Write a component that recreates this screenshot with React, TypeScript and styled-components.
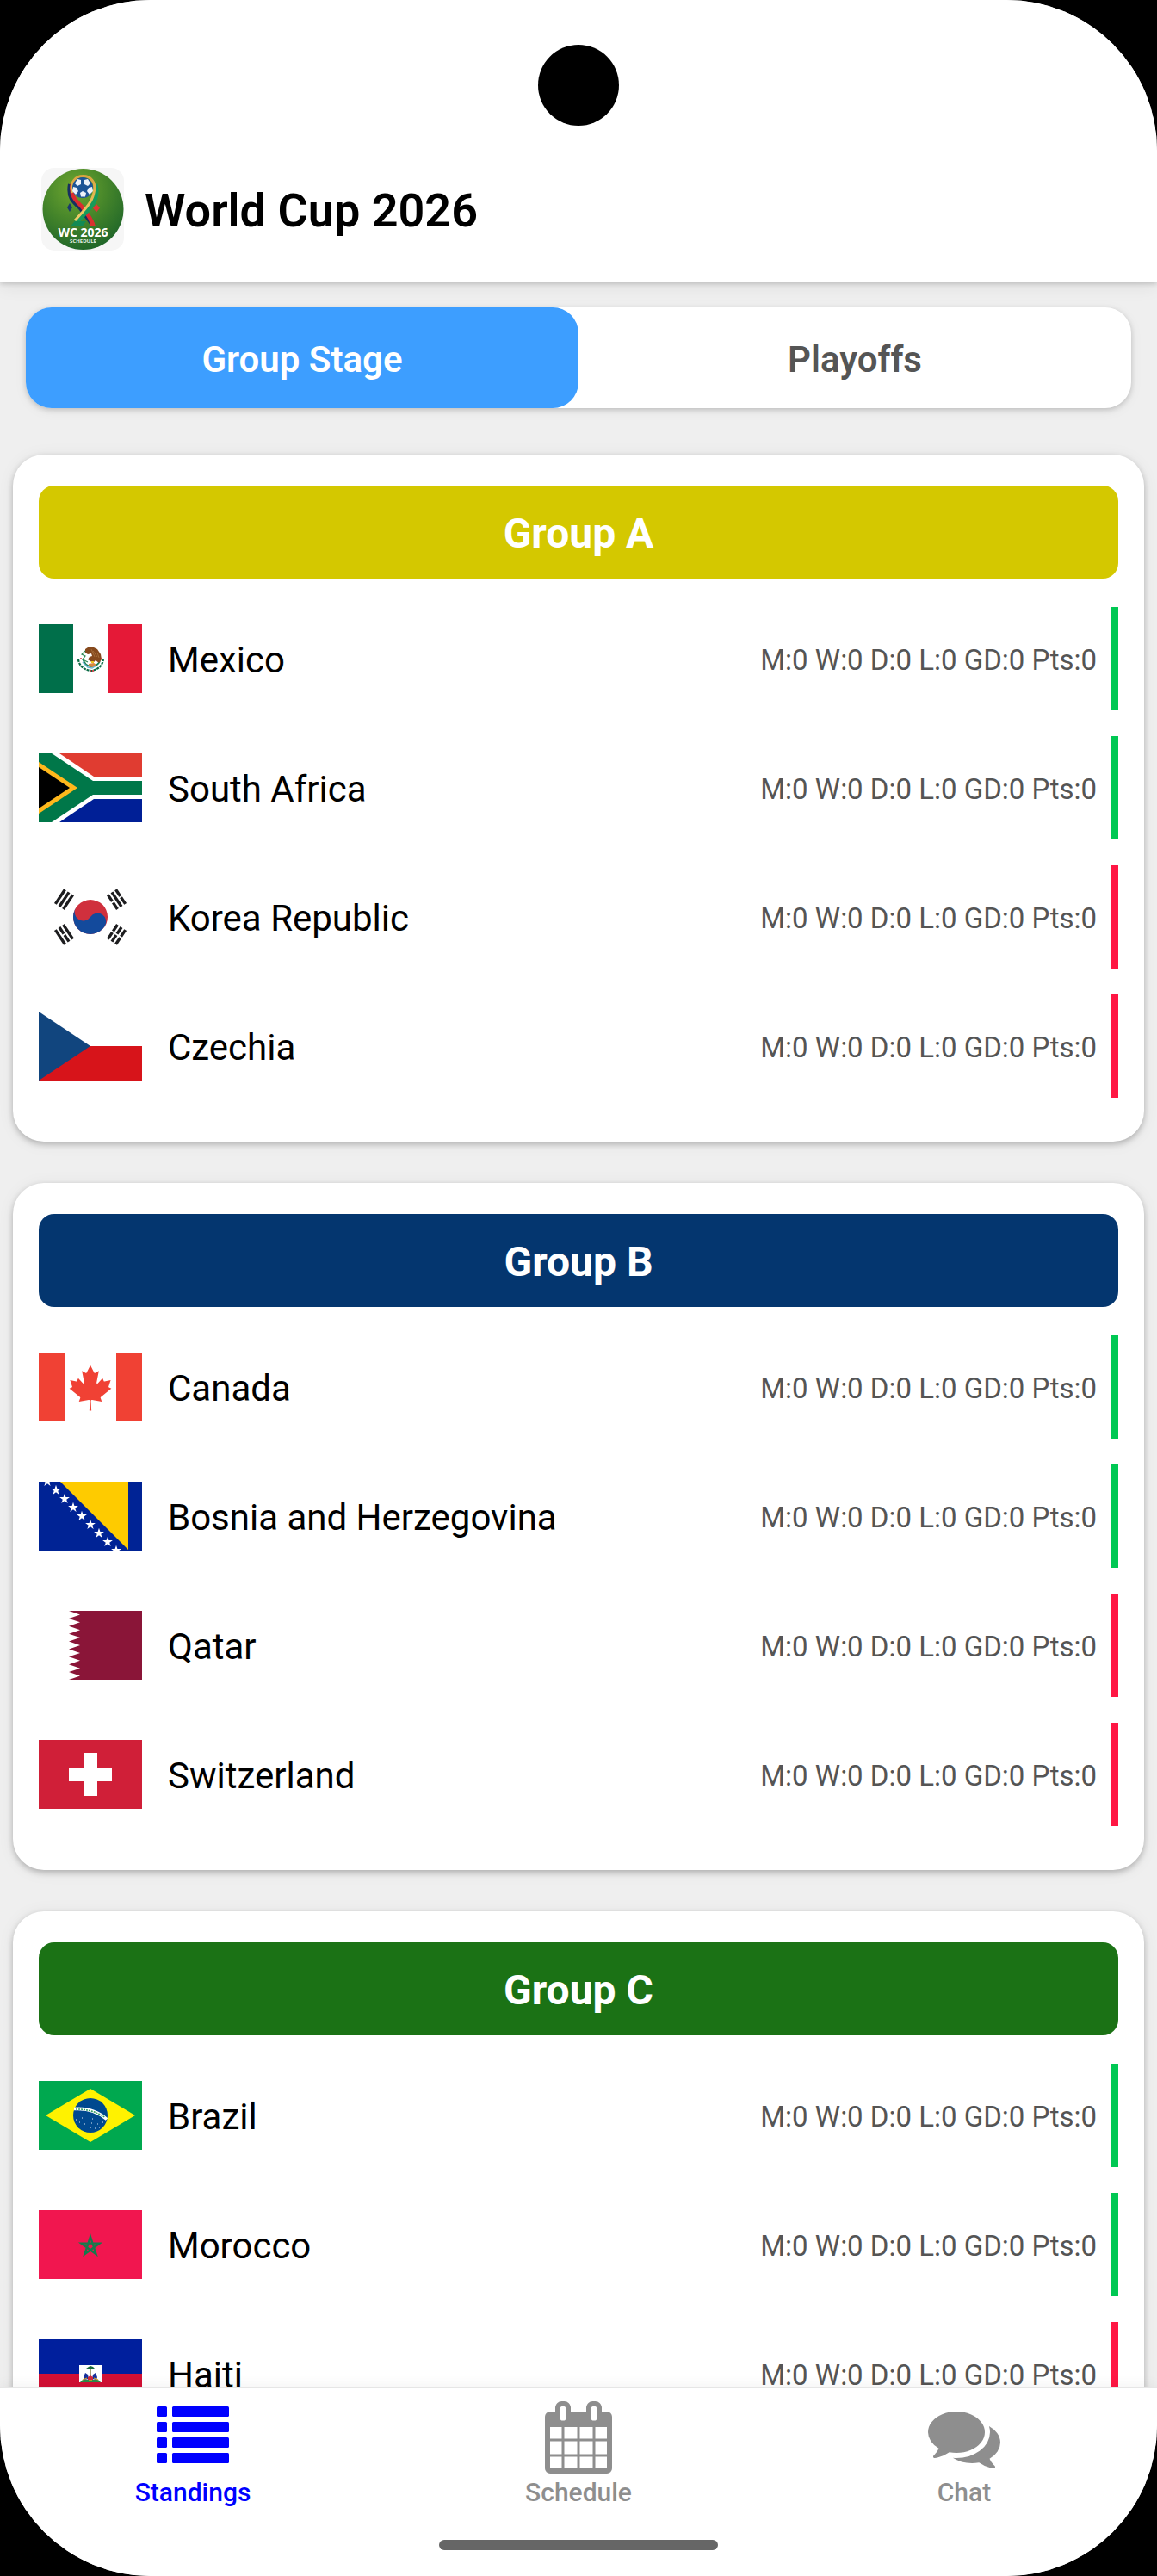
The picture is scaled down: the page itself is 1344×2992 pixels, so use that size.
import React from "react";
import styled, { createGlobalStyle } from "styled-components";

const GlobalStyle = createGlobalStyle`
  *, *::before, *::after { box-sizing: border-box; }
  body { margin: 0; background: #000; font-family: Roboto, "Liberation Sans", sans-serif; }
  button { font-family: inherit; border: 0; margin: 0; padding: 0; cursor: pointer; }
  ul, h1, h2 { margin: 0; padding: 0; list-style: none; }
`;

const Screen = styled.div`
  position: relative;
  display: flex;
  flex-direction: column;
  height: 100vh;
  overflow: hidden;
  background: #efefef;
  border-radius: 175px;
`;

const Camera = styled.div`
  position: absolute;
  top: 52px;
  left: 50%;
  width: 94px;
  height: 94px;
  margin-left: -47px;
  border-radius: 50%;
  background: #000;
`;

const Header = styled.header`
  display: flex;
  flex: none;
  align-items: center;
  gap: 24px;
  padding: 195px 48px 36px;
  background: #fff;
  box-shadow: 0 2px 6px rgba(0, 0, 0, 0.2), 0 6px 20px rgba(0, 0, 0, 0.07);
`;

const Title = styled.h1`
  padding-top: 4px;
  font-size: 54px;
  line-height: 64px;
  font-weight: 600;
  color: #000;
`;

const Main = styled.main`
  flex: 1;
  min-height: 0;
  overflow: hidden;
`;

const Tabs = styled.div`
  display: flex;
  margin: 30px 30px 0;
  border-radius: 30px;
  background: #fff;
  box-shadow: 0 2px 6px rgba(0, 0, 0, 0.18), 0 3px 16px rgba(0, 0, 0, 0.05);
`;

const Tab = styled.button<{ $active?: boolean }>`
  flex: 1;
  padding: 36px 0 32px;
  border-radius: 30px;
  font-size: 42px;
  line-height: 49px;
  font-weight: 600;
  background: ${(p) => (p.$active ? "#3d9eff" : "transparent")};
  color: ${(p) => (p.$active ? "#fff" : "#555")};
`;

const Groups = styled.div`
  display: flex;
  flex-direction: column;
  gap: 48px;
  padding: 54px 15px 48px;
`;

const Card = styled.section`
  padding: 36px 30px;
  border-radius: 36px;
  background: #fff;
  box-shadow: 0 3px 7px rgba(0, 0, 0, 0.24), 0 2px 20px rgba(0, 0, 0, 0.06);
`;

const GroupName = styled.h2<{ $color: string }>`
  margin-bottom: 18px;
  padding: 28px 0 24px;
  border-radius: 18px;
  background: ${(p) => p.$color};
  color: #fff;
  font-size: 48px;
  line-height: 56px;
  font-weight: 700;
  text-align: center;
`;

const TeamRow = styled.li`
  display: flex;
  align-items: center;
  padding: 15px 0;
`;

const FlagSvg = styled.svg`
  display: block;
  flex: none;
  width: 120px;
  height: 80px;
`;

const TeamName = styled.span`
  flex: 1;
  padding: 2px 0 0 30px;
  font-size: 42px;
  line-height: 49px;
  color: #000;
`;

const Stats = styled.span`
  padding: 2px 16px 0 0;
  font-size: 33px;
  line-height: 39px;
  color: #555;
`;

const Marker = styled.i<{ $through: boolean }>`
  flex: none;
  width: 9px;
  height: 120px;
  background: ${(p) => (p.$through ? "#00c853" : "#ff1744")};
`;

const Footer = styled.footer`
  position: relative;
  flex: none;
  padding-bottom: 30px;
  border-top: 2px solid #e6e6e6;
  background: #fff;
  box-shadow: 0 -2px 14px rgba(0, 0, 0, 0.05);
`;

const Nav = styled.nav`
  display: flex;
`;

const NavItem = styled.button<{ $active?: boolean }>`
  display: flex;
  flex: 1 0 0;
  flex-direction: column;
  align-items: center;
  gap: 4px;
  padding: 15px 0 0;
  background: none;
  color: ${(p) => (p.$active ? "#0000ff" : "#8e8e8e")};
  font-size: 30px;
  line-height: 36px;
  font-weight: 500;
`;

const NavIcon = styled.svg`
  display: block;
  width: 84px;
  height: 84px;
  fill: currentColor;
`;

const HomeIndicator = styled.div`
  width: 324px;
  height: 12px;
  margin: 37px auto 0;
  border-radius: 6px;
  background: #666;
`;

const LogoSvg = styled.svg`
  display: block;
  flex: none;
  width: 96px;
  height: 96px;
`;

function starPoints(cx: number, cy: number, r: number) {
  return Array.from({ length: 10 }, (_, i) => {
    const radius = i % 2 ? r * 0.382 : r;
    const a = (Math.PI / 5) * i - Math.PI / 2;
    return `${(cx + radius * Math.cos(a)).toFixed(2)},${(cy + radius * Math.sin(a)).toFixed(2)}`;
  }).join(" ");
}

const Mexico = () => (
  <>
    <path fill="#006f4a" d="M0 0h40v80H0z" />
    <path fill="#e51937" d="M80 0h40v80H80z" />
    <path d="M46 41c1 7 6 12 15 13 8-1 13-6 14-13" fill="none" stroke="#0b6b45" strokeWidth="2.2" strokeDasharray="3 1" />
    <path d="M51 40c2 6 6 9 10 9s8-2 10-6" fill="none" stroke="#1b7f52" strokeWidth="1.8" />
    <path d="M54 29l3-2 5-1 6 3 4 6 1 6-3 4-4-3-3 3-6-4 2-3 3-1-1-3-4 1-3-2z" fill="#86491d" />
    <path d="M63 31l5 7M61 29l4 9M68 33l2 6" stroke="#a8733f" strokeWidth="0.8" />
    <path d="M54 31l-4 4 4 2-3 4 6 3" fill="none" stroke="#2f8a55" strokeWidth="1.2" />
    <path d="M58 46l6-1 3 2-4 3-5-1z" fill="#d88742" />
    <path d="M51 44l6 6 5 1 5-3" fill="none" stroke="#69b6d2" strokeWidth="1.4" />
    <path d="M48 40h2M60 53v3M63 53v2M72 40h2" stroke="#d4363f" strokeWidth="1.6" />
    <path d="M61 43h3v2h-3z" fill="#efc319" />
  </>
);

const SouthAfrica = () => (
  <>
    <path fill="#fff" d="M0 0h120v80H0z" />
    <path fill="#e03c31" d="M24 0h96v27H64z" />
    <path fill="#001f96" d="M24 80h96V53H64z" />
    <path fill="#007749" d="M0 0h15l48 32h57v16H63L15 80H0z" />
    <path fill="#ffb81c" d="M0 10l45 30L0 70z" />
    <path fill="#000" d="M0 16l36 24L0 64z" />
  </>
);

const Korea = () => (
  <g transform="translate(60 40) scale(1.6667)">
    <g transform="rotate(-56.31)">
      <path d="M-6-25.300H6M-6-22H6M-6-18.700H6M-6 25.300H6M-6 22H6M-6 18.700H6" stroke="#1d1d1f" strokeWidth="2" />
      <path stroke="#fff" d="M0 17v10" />
    </g>
    <g transform="rotate(-123.69)">
      <path d="M-6-25.300H6M-6-22H6M-6-18.700H6M-6 25.300H6M-6 22H6M-6 18.700H6" stroke="#1d1d1f" strokeWidth="2" />
      <path stroke="#fff" d="M0-23.300v2.600M0 17v3.300M0 23.600v3" />
    </g>
    <g transform="rotate(-56.31)">
      <circle fill="#d0303d" r="12" />
      <path fill="#134a9c" d="M0-12A6 6 0 0 0 0 0A6 6 0 0 1 0 12A12 12 0 0 1 0-12Z" />
    </g>
  </g>
);

const Czechia = () => (
  <>
    <path fill="#d7141a" d="M0 40h120v40H0z" />
    <path fill="#11457e" d="M0 0l60 40L0 80z" />
  </>
);

const Canada = () => (
  <>
    <path fill="#f04134" d="M0 0h30v80H0zM90 0h30v80H90z" />
    <path
      fill="#f04134"
      transform="translate(60 41) scale(0.0131)"
      d="m-90 2030 45-863a95 95 0 0 0-111-98l-859 151 116-320a65 65 0 0 0-20-73l-941-762 212-99a65 65 0 0 0 34-79l-186-572 542 115a65 65 0 0 0 73-38l105-247 423 454a65 65 0 0 0 111-57l-204-1052 327 189a65 65 0 0 0 91-27l332-652 332 652a65 65 0 0 0 91 27l327-189-204 1052a65 65 0 0 0 111 57l423-454 105 247a65 65 0 0 0 73 38l542-115-186 572a65 65 0 0 0 34 79l212 99-941 762a65 65 0 0 0-20 73l116 320-859-151a95 95 0 0 0-111 98l45 863z"
    />
  </>
);

const Bosnia = () => (
  <>
    <path fill="#002395" d="M0 0h120v80H0z" />
    <path fill="#fecb00" d="M25 0h79v79z" />
    {Array.from({ length: 9 }, (_, i) => (
      <polygon key={i} fill="#fff" points={starPoints(10 + i * 10, i * 10, 6.2)} />
    ))}
  </>
);

const QATAR_EDGE = Array.from({ length: 9 }, (_, i) => {
  const step = 80 / 9;
  return `L48 ${(step * (i + 0.5)).toFixed(2)}L35 ${(step * (i + 1)).toFixed(2)}`;
}).join("");

const Qatar = () => <path fill="#8a1538" d={`M120 0H35${QATAR_EDGE}H120z`} />;

const Switzerland = () => (
  <>
    <path fill="#d01f38" d="M0 0h120v80H0z" />
    <path fill="#fff" d="M52 15h16v17h17v16H68v17H52V48H35V32h17z" />
  </>
);

const Brazil = () => (
  <>
    <path fill="#00a84f" d="M0 0h120v80H0z" />
    <path fill="#fff200" d="M8 40L60 9l52 31-52 31z" />
    <circle cx="60" cy="40" r="20" fill="#00498f" />
    <path d="M41 32.5c14-1 28 3 38 12" fill="none" stroke="#fff" strokeWidth="3.6" />
    <path d="M43 33c13-.5 25 3 34 9.500" fill="none" stroke="#2f9e5f" strokeWidth="1.500" strokeDasharray="2 1" />
    <path
      d="M43 45h1M47 48h1M50 43h1M53 50h1M52 46h1M59 46h1M61 49h1M60 54h1M68 50h1M70 54h1M74 48h1M65 55h1M62 44h1M66 37h1"
      stroke="#dfe9f4"
      strokeWidth="1"
    />
  </>
);

const Morocco = () => (
  <>
    <path fill="#f1164f" d="M0 0h120v80H0z" />
    <path
      d="M60 31l6.500 20-17-12.400h21L53.500 51z"
      fill="none"
      stroke="#157a4c"
      strokeWidth="2.400"
      strokeMiterlimit="10"
    />
  </>
);

const Haiti = () => (
  <>
    <path fill="#001f9d" d="M0 0h120v40H0z" />
    <path fill="#d21034" d="M0 40h120v40H0z" />
    <path fill="#fff" d="M47 30h26v20H47z" />
    <path d="M48 50l3-3h18l3 3z" fill="#2c8a4a" />
    <path d="M60 34v12" stroke="#6f6a2c" strokeWidth="1.300" />
    <path d="M55 34l3-2 2-1 3 1 2 2-3 0-2 1-2-1z" fill="#17683a" />
    <path d="M52 44l2-5 3 2 1 5-5 1zM68 44l-2-5-3 2-1 5 5 1z" fill="#16309c" />
    <path d="M57 44l3-2 3 2v3h-6z" fill="#d2283c" />
    <path d="M51 47l5-2M69 47l-5-2M58 48h4" stroke="#d8a520" strokeWidth="1.300" />
  </>
);

type Team = { name: string; flag: React.FC; through: boolean };
type Group = { name: string; color: string; teams: Team[] };

const GROUPS: Group[] = [
  {
    name: "Group A",
    color: "#d4c800",
    teams: [
      { name: "Mexico", flag: Mexico, through: true },
      { name: "South Africa", flag: SouthAfrica, through: true },
      { name: "Korea Republic", flag: Korea, through: false },
      { name: "Czechia", flag: Czechia, through: false },
    ],
  },
  {
    name: "Group B",
    color: "#04366f",
    teams: [
      { name: "Canada", flag: Canada, through: true },
      { name: "Bosnia and Herzegovina", flag: Bosnia, through: true },
      { name: "Qatar", flag: Qatar, through: false },
      { name: "Switzerland", flag: Switzerland, through: false },
    ],
  },
  {
    name: "Group C",
    color: "#1b7215",
    teams: [
      { name: "Brazil", flag: Brazil, through: true },
      { name: "Morocco", flag: Morocco, through: true },
      { name: "Haiti", flag: Haiti, through: false },
    ],
  },
];

function Logo() {
  return (
    <LogoSvg viewBox="0 0 96 96" role="img" aria-label="WC 2026 Schedule">
      <defs>
        <radialGradient id="grass" cx="0.4" cy="0.25" r="0.8">
          <stop offset="0" stopColor="#6fa62f" />
          <stop offset="0.5" stopColor="#45852a" />
          <stop offset="1" stopColor="#1d6429" />
        </radialGradient>
        <linearGradient id="gold" x1="0" y1="0" x2="0" y2="1">
          <stop offset="0" stopColor="#d9a441" />
          <stop offset="1" stopColor="#f0cf6a" />
        </linearGradient>
      </defs>
      <rect width="96" height="96" rx="15" fill="#f6f6f6" />
      <circle cx="48.500" cy="48" r="47" fill="url(#grass)" />
      <path d="M33 19c-3 15 4 21 12 28l14 19" fill="none" stroke="#17305f" strokeWidth="4" />
      <path d="M36 18c-3 14 4 20 11 27 5 6 10 13 13 21" fill="none" stroke="#dc2c2f" strokeWidth="4.500" />
      <path d="M63 19c3 13-1 21-8 29-5 6-11 11-16 18" fill="none" stroke="#169a5b" strokeWidth="5" />
      <path d="M36 29c-7-26 32-26 25 0-2 11-11 20-22 32" fill="none" stroke="url(#gold)" strokeWidth="3" />
      <path d="M39 62h13l-4 5.500H34z" fill="#128a54" />
      <path d="M55 60l5 0 3 7.500h-6z" fill="#d8322f" />
      <circle cx="48" cy="23" r="12" fill="#1e5596" />
      <g fill="#eef3fa">
        <path d="M42 13l4 1v5l-4 2-3-3zM54 13l-4 1v5l4 2 3-3zM37 22l4 1 2 4-3 4-4-4zM59 22l-4 1-2 4 3 4 4-4zM45 29l3-2 4 2-1 4.500h-5z" />
      </g>
      <path d="M33 41l3 5-3 5-3-5z" fill="#1b3a6d" />
      <path d="M64 42l4 4.500-4 5-4-5z" fill="#dd3735" />
      <text x="48.500" y="80" textAnchor="middle" fontFamily="Open Sans, sans-serif" fontWeight="700" fontSize="14" fill="#fff">
        WC 2026
      </text>
      <text x="48.500" y="87" textAnchor="middle" fontFamily="Open Sans, sans-serif" fontWeight="700" fontSize="6" fill="#e8f2e4">
        SCHEDULE
      </text>
    </LogoSvg>
  );
}

const ListIcon = () => (
  <NavIcon viewBox="0 0 1792 1792" aria-hidden="true">
    {[128, 512, 896, 1280].map((y) => (
      <React.Fragment key={y}>
        <rect x="0" y={y} width="256" height="256" rx="32" />
        <rect x="384" y={y} width="1408" height="256" rx="32" />
      </React.Fragment>
    ))}
  </NavIcon>
);

const CalendarIcon = () => (
  <NavIcon viewBox="0 0 1792 1792" aria-hidden="true">
    <path d="M192 1664h288v-288h-288v288zM544 1664h320v-288h-320v288zM192 1312h288v-320h-288v320zM544 1312h320v-320h-320v320zM192 928h288v-288h-288v288zM928 1664h320v-288h-320v288zM544 928h320v-288h-320v288zM1312 1664h288v-288h-288v288zM928 1312h320v-320h-320v320zM576 448v-288q0-13-9.500-22.500t-22.500-9.500h-64q-13 0-22.500 9.500t-9.500 22.500v288q0 13 9.500 22.500t22.500 9.500h64q13 0 22.500-9.500t9.500-22.500zM1312 1312h288v-320h-288v320zM928 928h320v-288h-320v288zM1312 928h288v-288h-288v288zM1344 448v-288q0-13-9.500-22.500t-22.500-9.500h-64q-13 0-22.500 9.500t-9.500 22.500v288q0 13 9.500 22.500t22.500 9.500h64q13 0 22.500-9.500t9.500-22.500zM1728 384v1280q0 52-38 90t-90 38h-1408q-52 0-90-38t-38-90v-1280q0-52 38-90t90-38h128v-96q0-66 47-113t113-47h64q66 0 113 47t47 113v96h384v-96q0-66 47-113t113-47h64q66 0 113 47t47 113v96h128q52 0 90 38t38 90z" />
  </NavIcon>
);

const ChatIcon = () => (
  <NavIcon viewBox="0 0 1792 1792" aria-hidden="true">
    <path d="M1408 768q0 139-94 257t-256.500 186.500-353.500 68.500q-86 0-176-16-124 88-278 128-36 9-86 16h-3q-11 0-20.500-8t-11.500-21q-1-3-1-6.500t.5-6.500 2-6l2.500-5 3.500-5.500 4-5 4.500-5 4-4.500q5-6 23-25t26-29.500 22.500-29 25-38.500 20.500-44q-124-72-195-177t-71-224q0-139 94-257t256.500-186.500 353.500-68.500 353.500 68.500 256.500 186.500 94 257zm384 256q0 120-71 224.500t-195 176.500q10 24 20.500 44t25 38.500 22.500 29 26 29.500 23 25q1 1 4 4.500t4.500 5 4 5 3.500 5.500l2.500 5 2 6 .5 6.500-1 6.500q-3 14-13 22t-22 7q-50-7-86-16-154-40-278-128-90 16-176 16-271 0-472-132 58 4 88 4 161 0 309-45t264-129q125-92 192-212t67-254q0-77-23-152 129 71 204 178t75 230z" />
  </NavIcon>
);

export default function App() {
  return (
    <>
      <GlobalStyle />
      <Screen>
        <Header>
          <Logo />
          <Title>World Cup 2026</Title>
        </Header>
        <Main>
          <Tabs role="tablist">
            <Tab $active role="tab" aria-selected="true">
              Group Stage
            </Tab>
            <Tab role="tab" aria-selected="false">
              Playoffs
            </Tab>
          </Tabs>
          <Groups>
            {GROUPS.map((group) => (
              <Card key={group.name}>
                <GroupName $color={group.color}>{group.name}</GroupName>
                <ul>
                  {group.teams.map(({ name, flag: Flag, through }) => (
                    <TeamRow key={name}>
                      <FlagSvg viewBox="0 0 120 80" aria-hidden="true">
                        <Flag />
                      </FlagSvg>
                      <TeamName>{name}</TeamName>
                      <Stats>M:0 W:0 D:0 L:0 GD:0 Pts:0</Stats>
                      <Marker $through={through} />
                    </TeamRow>
                  ))}
                </ul>
              </Card>
            ))}
          </Groups>
        </Main>
        <Footer>
          <Nav>
            <NavItem $active aria-current="page">
              <ListIcon />
              Standings
            </NavItem>
            <NavItem>
              <CalendarIcon />
              Schedule
            </NavItem>
            <NavItem>
              <ChatIcon />
              Chat
            </NavItem>
          </Nav>
          <HomeIndicator />
        </Footer>
        <Camera />
      </Screen>
    </>
  );
}
